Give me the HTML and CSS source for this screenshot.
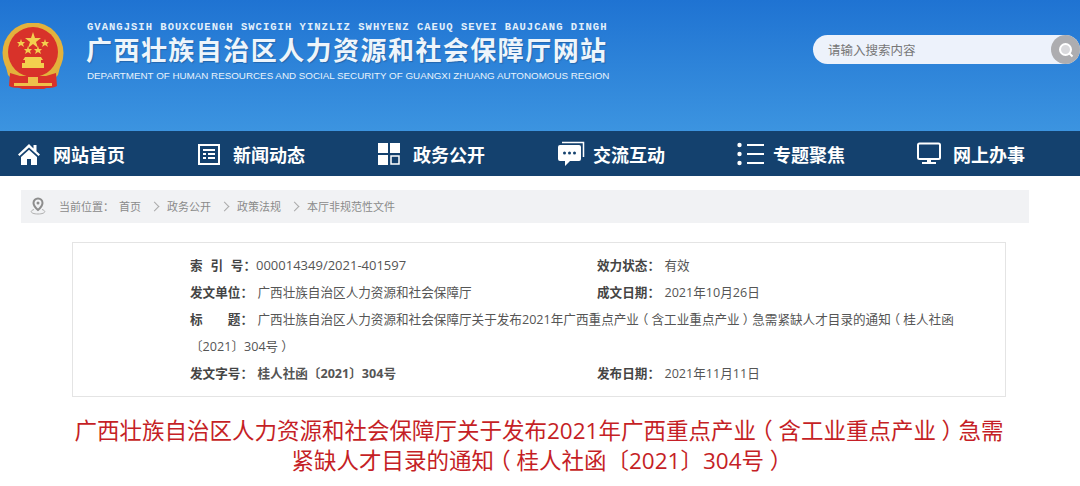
FILE: index.html
```html
<!DOCTYPE html>
<html lang="zh-CN">
<head>
    <meta charset="UTF-8">
    <meta name="viewport" content="width=device-width, initial-scale=1.0">
    <title>广西壮族自治区人力资源和社会保障厅网站</title>
    <link rel="stylesheet" href="styles.css">
</head>
<body>

    <!-- site header -->
    <header class="top">
        <svg class="emblem" width="66" height="70" viewBox="0 0 66 70">
            <circle cx="33" cy="30" r="30.500" fill="#e3b23c"/>
            <circle cx="33" cy="29" r="25" fill="#d8322a"/>
            <polygon fill="#f3d04e" points="33,9 35,15 41,15 36,19 38,25 33,21 28,25 30,19 25,15 31,15"/>
            <polygon fill="#f3d04e" points="21,16 22,19 25,19 23,21 24,24 21,22 18,24 19,21 17,19 20,19"/>
            <polygon fill="#f3d04e" points="45,16 46,19 49,19 47,21 48,24 45,22 42,24 43,21 41,19 44,19"/>
            <polygon fill="#f3d04e" points="28,23 29,26 32,26 30,28 31,31 28,29 25,31 26,28 24,26 27,26"/>
            <polygon fill="#f3d04e" points="38,23 39,26 42,26 40,28 41,31 38,29 35,31 36,28 34,26 37,26"/>
            <path fill="#f3d04e" d="M25 34h16l2 3h-2v3h3v5H22v-5h3v-3h-2z"/>
            <path fill="#e3b23c" d="M5 40c3 10 10 15 15 17h26c5-2 12-7 15-17l-3 12-6 6H14l-6-6z"/>
            <path fill="#d8322a" d="M10 50l10 3h26l10-3 1 13c-6 3-10 1-13 3H22c-3-2-7 0-13-3z"/>
            <path fill="#eec04a" d="M14 60h38v3H14zM28 54h10v9H28z"/>
        </svg>
        <div class="brand">
            <p class="brand-zhuang">GVANGJSIH BOUXCUENGH SWCIGIH YINZLIZ SWHYENZ CAEUQ SEVEI BAUJCANG DINGH</p>
            <h1 class="brand-name">广西壮族自治区人力资源和社会保障厅网站</h1>
            <p class="brand-en">DEPARTMENT OF HUMAN RESOURCES AND SOCIAL SECURITY OF GUANGXI ZHUANG AUTONOMOUS REGION</p>
        </div>
        <form class="search">
            <span class="search-text">请输入搜索内容</span>
            <span class="search-btn">
                <svg width="18" height="18" viewBox="0 0 18 18">
                    <circle cx="8.500" cy="8.500" r="5.500" fill="#d9d9dc" stroke="#fff" stroke-width="2"/>
                    <path d="M12.500 12.500l3 3" stroke="#fff" stroke-width="2"/>
                </svg>
            </span>
        </form>
    </header>

    <!-- main nav -->
    <nav class="nav">
        <a class="nav-item" href="#">
            <svg width="24" height="24" viewBox="0 0 24 24">
                <path fill="#fff" d="M12 2L1 12.500l1.500 1.500L12 5.500l9.500 8.500 1.500-1.500-3.500-3.300V3h-3v3.400zM4 15v8h6v-6h4v6h6v-8l-8-7.200z"/>
            </svg>
            <span>网站首页</span>
        </a>
        <a class="nav-item" href="#">
            <svg width="24" height="24" viewBox="0 0 24 24">
                <path fill="none" stroke="#fff" stroke-width="2" d="M2 3h20v19H2z"/>
                <path fill="#fff" d="M6 7h12v2H6zM6 11h3v2H6zM11 11h7v2h-7zM6 15h3v2H6zM11 15h7v2h-7z"/>
            </svg>
            <span>新闻动态</span>
        </a>
        <a class="nav-item" href="#">
            <svg width="24" height="24" viewBox="0 0 24 24">
                <path fill="#fff" d="M1 1h10v10H1zM13 1h10v10H13zM1 13h10v10H1z"/>
                <path fill="none" stroke="#fff" stroke-width="1.500" d="M14 14h8v8h-8z"/>
            </svg>
            <span>政务公开</span>
        </a>
        <a class="nav-item nav-wide-icon" href="#">
            <svg width="28" height="26" viewBox="0 0 28 26">
                <path fill="none" stroke="#fff" stroke-width="1.500" d="M5 1.500h21.500V16"/>
                <path fill="#fff" d="M3 4h19a2 2 0 0 1 2 2v12a2 2 0 0 1-2 2H13l-5 5v-5H3a2 2 0 0 1-2-2V6a2 2 0 0 1 2-2z"/>
                <circle cx="7.500" cy="12" r="1.500" fill="#14416e"/>
                <circle cx="12.500" cy="12" r="1.500" fill="#14416e"/>
                <circle cx="17.500" cy="12" r="1.500" fill="#14416e"/>
            </svg>
            <span>交流互动</span>
        </a>
        <a class="nav-item nav-wide-icon" href="#">
            <svg width="28" height="24" viewBox="0 0 28 24">
                <circle cx="2.500" cy="3" r="2.200" fill="#fff"/>
                <circle cx="2.500" cy="12" r="2.200" fill="#fff"/>
                <circle cx="2.500" cy="21" r="2.200" fill="#fff"/>
                <path fill="#fff" d="M10 2h17v2H10zM10 11h17v2H10zM10 20h17v2H10z"/>
            </svg>
            <span>专题聚焦</span>
        </a>
        <a class="nav-item" href="#">
            <svg width="24" height="24" viewBox="0 0 24 24">
                <rect x="1" y="1.500" width="22" height="15.500" rx="1.500" fill="none" stroke="#fff" stroke-width="2"/>
                <path fill="#fff" d="M10 17h4v3h-4zM5 20h14v2H5z"/>
            </svg>
            <span>网上办事</span>
        </a>
    </nav>

    <!-- breadcrumb -->
    <div class="crumb">
        <svg class="crumb-pin" width="18" height="18" viewBox="0 0 18 18">
            <path fill="none" stroke="#8d8d8d" stroke-width="2" d="M9 1.500a4.500 4.500 0 0 1 4.500 4.500C13.500 9 9 13 9 13S4.500 9 4.500 6A4.500 4.500 0 0 1 9 1.500z"/>
            <circle cx="9" cy="6" r="1.500" fill="#8d8d8d"/>
            <path fill="none" stroke="#b0b0b0" d="M5 12.500c-5 1.500-3 4.500 4 4.500s9-3 4-4.500"/>
        </svg>
        <span>当前位置：<span class="crumb-home">首页</span></span>
        <i class="crumb-sep"></i>
        <span>政务公开</span>
        <i class="crumb-sep"></i>
        <span>政策法规</span>
        <i class="crumb-sep"></i>
        <span>本厅非规范性文件</span>
    </div>

    <!-- document info -->
    <section class="info">
        <div class="info-row"><b class="info-label info-label-tight"><span class="gap-index">索引</span>号：</b><span class="info-num">000014349/2021-401597</span></div>
        <div class="info-row"><b class="info-label">效力状态：</b>有效</div>
        <div class="info-row"><b class="info-label">发文单位：</b>广西壮族自治区人力资源和社会保障厅</div>
        <div class="info-row"><b class="info-label">成文日期：</b>2021年10月26日</div>
        <div class="info-row info-wide">
            <span class="line"><b class="info-label"><span class="gap-title">标</span>题：</b>广西壮族自治区人力资源和社会保障厅关于发布2021年广西重点产业<span class="paren">（</span>含工业重点产业<span class="paren">）</span>急需紧缺人才目录的通知<span class="paren">（</span>桂人社函</span>
            <span class="line">〔2021〕304号<span class="paren">）</span></span>
        </div>
        <div class="info-row"><b class="info-label">发文字号：</b><b>桂人社函〔2021〕304号</b></div>
        <div class="info-row"><b class="info-label">发布日期：</b>2021年11月11日</div>
    </section>

    <h2 class="doc-title">
        <span class="line">广西壮族自治区人力资源和社会保障厅关于发布2021年广西重点产业<span class="paren">（</span>含工业重点产业<span class="paren">）</span>急需</span>
        <span class="line">紧缺人才目录的通知<span class="paren">（</span>桂人社函〔2021〕304号<span class="paren">）</span></span>
    </h2>

</body>
</html>
```

FILE: styles.css
```css
* {
  margin: 0;
  padding: 0;
  box-sizing: border-box;
}

body {
  background-color: white;
  font-family: "Open Sans", "Noto Sans CJK SC", sans-serif;
  color: #555;
  overflow: hidden;
}

a {
  text-decoration: none;
}

.top {
  display: flex;
  align-items: flex-start;
  height: 131px;
  background-image: linear-gradient(180deg, #1f73d2, #3c94e0);
}

.emblem {
  flex: none;
  margin: 23px 0 0 0;
}

.brand {
  width: 530px;
  margin: 21px 0 0 21px;
  color: white;
}

.brand-zhuang {
  font-family: "Liberation Mono", monospace;
  font-size: 10.5px;
  font-weight: bold;
  line-height: 13px;
  letter-spacing: 1.03px;
  white-space: nowrap;
  color: #e3f0fb;
}

.brand-name {
  margin-left: -1px;
  font-size: 26px;
  line-height: 32px;
  letter-spacing: 1.45px;
  white-space: nowrap;
  color: #eef5fb;
  text-shadow: 1px 1px 1px #2467ad;
}

.brand-en {
  margin-top: 3px;
  font-family: "Liberation Sans", sans-serif;
  font-size: 9.8px;
  line-height: 14px;
  white-space: nowrap;
  color: #e8f2fb;
}

.search {
  display: flex;
  align-items: center;
  justify-content: space-between;
  width: 267px;
  height: 29px;
  margin: 35px 0 0 196px;
  background-color: #edf2fb;
  border-radius: 15px;
}

.search-text {
  padding-left: 15px;
  font-size: 12.5px;
  color: #777;
}

.search-btn {
  display: flex;
  align-items: center;
  justify-content: center;
  width: 29px;
  height: 29px;
  background-color: #adadb0;
  border-radius: 50%;
}

.nav {
  display: flex;
  height: 45px;
  background-color: #14416e;
}

.nav-item {
  display: flex;
  align-items: center;
  width: 180px;
  padding-left: 17px;
  gap: 12px;
  color: white;
  font-size: 18px;
  font-weight: bold;
  white-space: nowrap;
}

.nav-wide-icon {
  gap: 8px;
}

.crumb {
  display: flex;
  align-items: center;
  gap: 8px;
  width: 1008px;
  height: 33px;
  margin: 14px 0 0 21px;
  padding: 0 0 1px 8px;
  background-color: #f1f2f4;
  font-size: 11px;
  color: #8a8a8a;
}

.crumb-pin {
  margin-right: 4px;
}

.crumb-home {
  margin-left: 5px;
}

/* thin chevron between crumbs */
.crumb-sep {
  width: 10px;
  height: 10px;
  display: flex;
  align-items: center;
  justify-content: center;
}

.crumb-sep::before {
  content: "";
  width: 6px;
  height: 6px;
  border-top: 1px solid #aaa;
  border-right: 1px solid #aaa;
  transform: rotate(45deg);
}

.info {
  display: grid;
  grid-template-columns: 407px 1fr;
  align-content: center;
  width: 934px;
  height: 155px;
  margin: 19px 0 0 72px;
  padding: 0 45px 1px 117px;
  border: 1px solid #e4e4e4;
  font-size: 12.6px;
  line-height: 27px;
  color: #555;
}

.info-wide {
  grid-column: 1 / 3;
}

.info-label {
  margin-right: 4.5px;
  color: #444;
}

.info-label-tight {
  margin-right: 0;
}

.info-num {
  font-size: 13px;
}

.gap-index {
  letter-spacing: 7.8px;
}

.gap-title {
  letter-spacing: 25.2px;
}

/* each wrapped line of the long title */
.line {
  display: block;
  white-space: nowrap;
}

/* full-width brackets sit in the middle of their box */
.paren {
  font-feature-settings: "halt";
  padding: 0 .25em;
}

.doc-title {
  width: 934px;
  margin: 19px 0 0 72px;
  font-size: 22.5px;
  font-weight: normal;
  line-height: 30px;
  color: #c51f26;
  text-align: center;
}
```
